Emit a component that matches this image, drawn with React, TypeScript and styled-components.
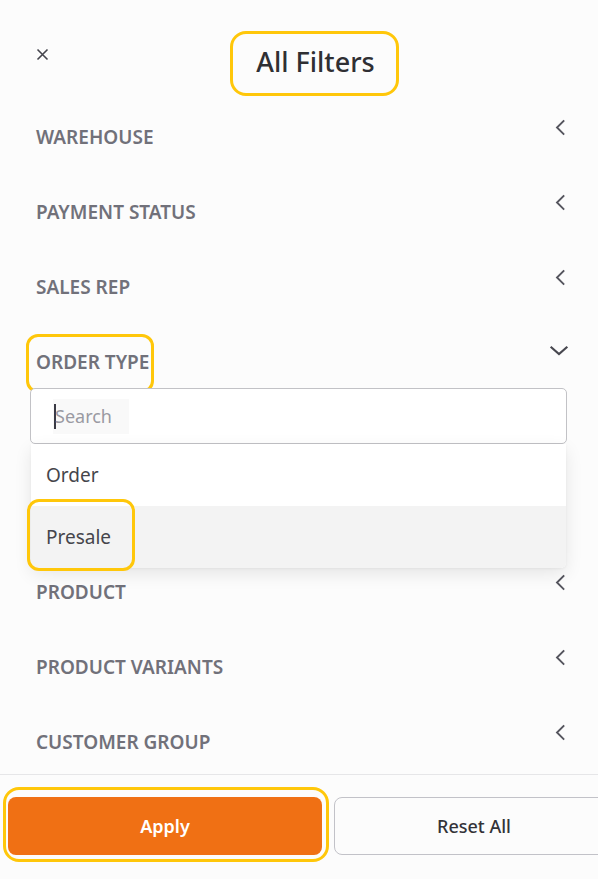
import React from "react";
import styled, { createGlobalStyle } from "styled-components";

const Global = createGlobalStyle`
  html, body { margin: 0; padding: 0; background: #fcfcfc; }
  * { box-sizing: border-box; }
`;

const Panel = styled.div`
  width: 598px;
  height: 879px;
  background: #fcfcfc;
  display: flex;
  flex-direction: column;
  overflow: hidden;
  font-family: "Noto Sans", "Open Sans", sans-serif;
`;

const Header = styled.div`
  height: 100px;
  flex: none;
  display: grid;
  grid-template-columns: 12px 1fr;
  padding: 31px 0 0 35px;
`;

const CloseButton = styled.button`
  width: 14px;
  height: 14px;
  margin-top: 16px;
  padding: 0;
  border: none;
  background: none;
  display: flex;
  align-items: center;
  justify-content: center;
  cursor: pointer;
`;

const Highlight = styled.span<{ $t: number; $r: number; $b: number; $l: number; $radius?: number }>`
  position: relative;
  display: inline-block;
  &::after {
    content: "";
    position: absolute;
    top: ${(p) => p.$t}px;
    right: ${(p) => p.$r}px;
    bottom: ${(p) => p.$b}px;
    left: ${(p) => p.$l}px;
    border: 3px solid #ffc70a;
    border-radius: ${(p) => p.$radius ?? 14}px;
    pointer-events: none;
  }
`;

const Title = styled.h1`
  justify-self: center;
  margin: 13px 14px 0 0;
  padding: 0;
  font-size: 27px;
  font-weight: 500;
  line-height: 36px;
  color: #2f2f33;
`;

const List = styled.div`
  flex: 1;
  min-height: 0;
  overflow: hidden;
`;

const Section = styled.div``;

const SectionHeader = styled.div<{ $open?: boolean }>`
  height: ${(p) => (p.$open ? 63 : 75)}px;
  display: flex;
  justify-content: space-between;
  align-items: flex-start;
  padding: 25px 30px 0 36px;
`;

const Label = styled.span`
  font-size: 19px;
  font-weight: 600;
  line-height: 24px;
  color: #71717a;
`;

const Chevron = styled.svg`
  flex: none;
  margin-top: -6px;
`;

const Body = styled.div`
  padding: 0 31px 111px 30px;
`;

const SearchWrap = styled.div`
  position: relative;
`;

const SearchField = styled.div`
  height: 56px;
  border: 1px solid #c2c2c6;
  border-radius: 5px;
  background: #ffffff;
  display: flex;
  align-items: center;
  padding-left: 22px;
`;

const SearchInner = styled.div`
  height: 35px;
  width: 76px;
  background: #f9f9f9;
  display: flex;
  align-items: center;
`;

const Caret = styled.span`
  width: 2px;
  height: 25px;
  background: #3a3a44;
  margin-left: 1px;
`;

const Placeholder = styled.span`
  font-size: 18px;
  color: #9a9aa2;
  line-height: 24px;
  margin-left: -1px;
`;

const Menu = styled.ul`
  position: absolute;
  top: 56px;
  left: 1px;
  right: 1px;
  margin: 0;
  padding: 0;
  list-style: none;
  background: #ffffff;
  border-radius: 0 0 5px 5px;
  box-shadow: 0 6px 18px rgba(0, 0, 0, 0.09), 0 1px 3px rgba(0, 0, 0, 0.05);
  z-index: 2;
`;

const Option = styled.li<{ $active?: boolean }>`
  height: 62px;
  display: flex;
  align-items: center;
  padding-left: 15px;
  font-size: 19px;
  color: #45454b;
  background: ${(p) => (p.$active ? "#f3f3f3" : "#ffffff")};
  &:last-child { border-radius: 0 0 5px 5px; }
`;

const Footer = styled.div`
  flex: none;
  height: 105px;
  border-top: 1px solid #e6e6e8;
  display: flex;
  align-items: flex-start;
  gap: 12px;
  padding: 22px 0 0 8px;
`;

const Button = styled.button<{ $primary?: boolean }>`
  flex: none;
  display: block;
  width: ${(p) => (p.$primary ? 314 : 280)}px;
  height: 58px;
  border-radius: 8px;
  font-family: inherit;
  font-size: 18px;
  font-weight: ${(p) => (p.$primary ? 600 : 500)};
  color: ${(p) => (p.$primary ? "#ffffff" : "#333338")};
  background: ${(p) => (p.$primary ? "#f07014" : "#fcfcfc")};
  border: ${(p) => (p.$primary ? "none" : "1px solid #c2c2c8")};
  cursor: pointer;
`;

const ApplyWrap = styled(Highlight)`
  display: block;
  flex: none;
`;

const ChevronLeft = () => (
  <Chevron width="12" height="17" viewBox="0 0 12 17" style={{ marginRight: 2 }}>
    <path d="M9.5 2 L3 8.5 L9.5 15" fill="none" stroke="#55555e" strokeWidth="1.9" strokeLinecap="square" />
  </Chevron>
);

const ChevronDown = () => (
  <Chevron width="20" height="12" viewBox="0 0 20 12" style={{ marginTop: -5, marginRight: -1 }}>
    <path d="M2.5 2.5 L10 9 L17.5 2.5" fill="none" stroke="#47474f" strokeWidth="2.2" strokeLinecap="square" />
  </Chevron>
);

const sectionsTop = ["WAREHOUSE", "PAYMENT STATUS", "SALES REP"];
const sectionsBottom = ["PRODUCT", "PRODUCT VARIANTS", "CUSTOMER GROUP"];

export default function App() {
  return (
    <>
      <Global />
      <Panel>
        <Header>
          <CloseButton aria-label="Close">
            <svg width="13" height="13" viewBox="0 0 13 13">
              <path d="M1.5 1.5 L11.5 11.5 M11.5 1.5 L1.5 11.5" stroke="#45454d" strokeWidth="1.6" />
            </svg>
          </CloseButton>
          <Title>
            <Highlight $t={-13} $r={-24} $b={-16} $l={-26} $radius={16}>
              All Filters
            </Highlight>
          </Title>
        </Header>
        <List>
          {sectionsTop.map((s) => (
            <Section key={s}>
              <SectionHeader>
                <Label>{s}</Label>
                <ChevronLeft />
              </SectionHeader>
            </Section>
          ))}
          <Section>
            <SectionHeader $open>
              <Highlight $t={-16} $r={-5} $b={-19} $l={-10} $radius={12}>
                <Label>ORDER TYPE</Label>
              </Highlight>
              <ChevronDown />
            </SectionHeader>
            <Body>
              <SearchWrap>
                <SearchField>
                  <SearchInner>
                    <Caret />
                    <Placeholder>Search</Placeholder>
                  </SearchInner>
                </SearchField>
                <Menu>
                  <Option>Order</Option>
                  <Option $active>
                    <Highlight $t={-25} $r={-24} $b={-21} $l={-19} $radius={12}>
                      Presale
                    </Highlight>
                  </Option>
                </Menu>
              </SearchWrap>
            </Body>
          </Section>
          {sectionsBottom.map((s) => (
            <Section key={s}>
              <SectionHeader>
                <Label>{s}</Label>
                <ChevronLeft />
              </SectionHeader>
            </Section>
          ))}
        </List>
        <Footer>
          <ApplyWrap $t={-10} $r={-7} $b={-7} $l={-5} $radius={16}>
            <Button $primary>Apply</Button>
          </ApplyWrap>
          <Button>Reset All</Button>
        </Footer>
      </Panel>
    </>
  );
}
